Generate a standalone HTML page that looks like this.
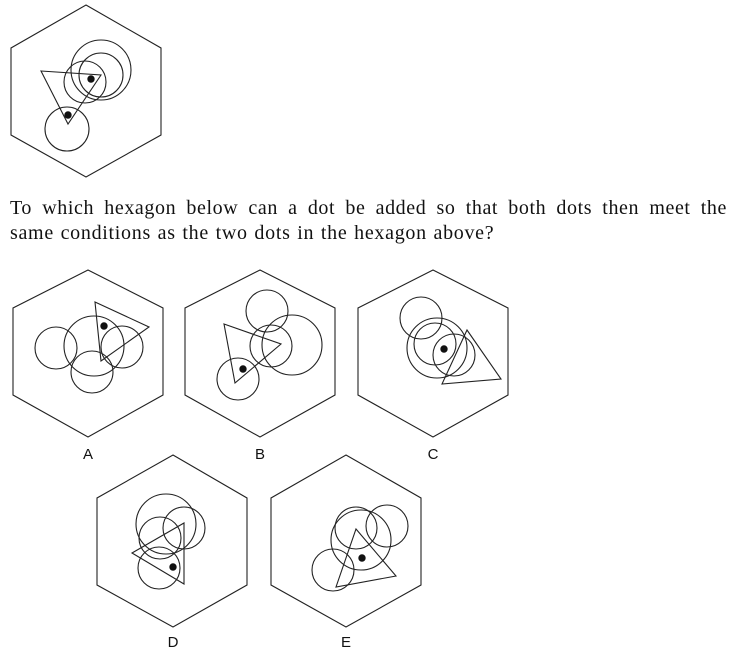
<!DOCTYPE html>
<html><head><style>
html,body{margin:0;padding:0;background:#fff;width:733px;height:653px;overflow:hidden;position:relative}
svg{position:absolute;left:0;top:0}
.t{position:absolute;left:10px;top:196px;width:717px;font-family:"Liberation Serif",serif;font-size:20px;line-height:25px;color:#111}
.l1{display:block;text-align:justify;text-align-last:justify;white-space:nowrap;letter-spacing:0.6px}
.l2{display:block;letter-spacing:0.7px;word-spacing:1px}
</style></head><body>
<svg width="733" height="653" viewBox="0 0 733 653" fill="none" stroke="#222" stroke-width="1.1">
<polygon points="86,5 161,48 161,135 86,177 11,135 11,48"/>
<circle cx="101" cy="70" r="30"/><circle cx="101" cy="75" r="22"/><circle cx="85" cy="82" r="21"/><circle cx="67" cy="129" r="22"/>
<polygon points="41,71 101,75 68,124"/>
<g fill="#111" stroke="none"><circle cx="91" cy="79" r="3.7"/><circle cx="68" cy="115" r="3.7"/></g>

<polygon points="88,270 163,308 163,395 88,437 13,395 13,308"/>
<circle cx="56" cy="348" r="21"/><circle cx="94" cy="346" r="30"/><circle cx="122" cy="347" r="21"/><circle cx="92" cy="372" r="21"/>
<polygon points="95,302 149,327 101,361"/>
<circle cx="104" cy="326" r="3.7" fill="#111" stroke="none"/>

<polygon points="260,270 335,308 335,395 260,437 185,395 185,308"/>
<circle cx="267" cy="311" r="21"/><circle cx="271" cy="346" r="21"/><circle cx="292" cy="345" r="30"/><circle cx="238" cy="379" r="21"/>
<polygon points="224,324 281,344 235,383"/>
<circle cx="243" cy="369" r="3.7" fill="#111" stroke="none"/>

<polygon points="433,270 508,308 508,395 433,437 358,395 358,308"/>
<circle cx="421" cy="318" r="21"/><circle cx="437" cy="348" r="30"/><circle cx="435" cy="344" r="21"/><circle cx="454" cy="355" r="21"/>
<polygon points="467,330 501,379 442,384"/>
<circle cx="444" cy="349" r="3.7" fill="#111" stroke="none"/>

<polygon points="173,455 247,498 247,585 173,627 97,585 97,498"/>
<circle cx="166" cy="524" r="30"/><circle cx="160" cy="538" r="21"/><circle cx="184" cy="528" r="21"/><circle cx="159" cy="568" r="21"/>
<polygon points="132,553 184,523 184,584"/>
<circle cx="173" cy="567" r="3.7" fill="#111" stroke="none"/>

<polygon points="346,455 421,498 421,585 346,627 271,585 271,498"/>
<circle cx="361" cy="540" r="30"/><circle cx="356" cy="528" r="21"/><circle cx="387" cy="526" r="21"/><circle cx="333" cy="570" r="21"/>
<polygon points="356,529 396,576 336,587"/>
<circle cx="362" cy="558" r="3.7" fill="#111" stroke="none"/>

<g fill="#111" stroke="none" font-family="Liberation Sans, sans-serif" font-size="15" text-anchor="middle">
<text x="88" y="459">A</text><text x="260" y="459">B</text><text x="433" y="459">C</text>
<text x="173" y="647">D</text><text x="346" y="647">E</text>
</g>
</svg>
<div class="t"><span class="l1">To which hexagon below can a dot be added so that both dots then meet the</span><span class="l2">same conditions as the two dots in the hexagon above?</span></div>
</body></html>
